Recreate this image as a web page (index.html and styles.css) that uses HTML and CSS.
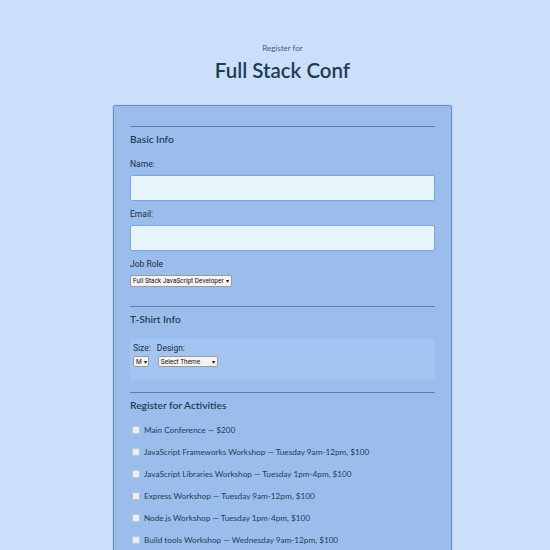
FILE: index.html
```html
<!DOCTYPE html>
<html>
<head>
<meta charset="utf-8">
<link rel="stylesheet" href="styles.css">
</head>
<body>
<div class="page">
  <header class="header">
    <div class="pre">Register for</div>
    <h1 class="title">Full Stack Conf</h1>
  </header>
  <form class="card">
    <fieldset class="section">
      <hr class="rule">
      <h2 class="legend">Basic Info</h2>
      <label class="label">Name:</label>
      <div class="input"></div>
      <label class="label">Email:</label>
      <div class="input"></div>
      <label class="label">Job Role</label>
      <div class="select role">Full Stack JavaScript Developer<span class="arrow">▾</span></div>
    </fieldset>
    <fieldset class="section">
      <hr class="rule">
      <h2 class="legend">T-Shirt Info</h2>
      <div class="shirt">
        <div class="field">
          <span class="small">Size:</span>
          <div class="select size">M<span class="arrow">▾</span></div>
        </div>
        <div class="field">
          <span class="small">Design:</span>
          <div class="select design">Select Theme<span class="arrow">▾</span></div>
        </div>
      </div>
    </fieldset>
    <fieldset class="section">
      <hr class="rule">
      <h2 class="legend">Register for Activities</h2>
      <div class="act"><span class="box"></span>Main Conference — $200</div>
      <div class="act"><span class="box"></span>JavaScript Frameworks Workshop — Tuesday 9am-12pm, $100</div>
      <div class="act"><span class="box"></span>JavaScript Libraries Workshop — Tuesday 1pm-4pm, $100</div>
      <div class="act"><span class="box"></span>Express Workshop — Tuesday 9am-12pm, $100</div>
      <div class="act"><span class="box"></span>Node.js Workshop — Tuesday 1pm-4pm, $100</div>
      <div class="act"><span class="box"></span>Build tools Workshop — Wednesday 9am-12pm, $100</div>
    </fieldset>
  </form>
</div>
</body>
</html>
```
FILE: styles.css
```css
html, body {
  margin: 0;
  padding: 0;
  background: #cbdffa;
  height: 100%;
  overflow: hidden;
}
.page {
  padding-left: 15px;
  font-family: Lato, "Noto Sans", sans-serif;
  color: #1c3d55;
}
.header {
  text-align: center;
  padding-top: 43px;
}
.pre {
  font-size: 8px;
  line-height: 11px;
  color: #4b5d70;
}
.title {
  margin: 3px 0 0;
  font-size: 20.5px;
  line-height: 26px;
  font-weight: 600;
  color: #1c3d55;
}
.card {
  width: 339px;
  box-sizing: border-box;
  margin: 22px auto 0;
  background: #9bbdec;
  border: 1px solid #6b8cbd;
  border-radius: 2px;
  padding: 20px 16px 20px;
  box-shadow: 0 0 2px rgba(80,110,160,0.3);
}
.section {
  border: 0;
  margin: 0;
  padding: 0;
  display: flex;
  flex-direction: column;
  align-items: flex-start;
}
.rule {
  align-self: stretch;
  border: 0;
  height: 1px;
  background: #5a7fae;
  margin: 0;
}
.legend {
  margin: 5px 0 0;
  font-size: 10.2px;
  line-height: 14px;
  font-weight: 600;
  color: #1c3d55;
}
.label {
  font-family: Roboto, "Liberation Sans", sans-serif;
  font-size: 8.5px;
  line-height: 10px;
  color: #1e2e40;
  margin-top: 8px;
}
.legend + .label { margin-top: 13px; }
.input {
  align-self: stretch;
  height: 26px;
  box-sizing: border-box;
  margin-top: 6px;
  background: #e6f4fc;
  border: 1px solid #7ca4e2;
  border-radius: 2px;
  box-shadow: inset 0 0 1px rgba(255,255,255,0.6);
}
.select {
  font-family: Roboto, "Liberation Sans", sans-serif;
  font-size: 6.5px;
  line-height: 8px;
  color: #111;
  background: #f3f3f3;
  border: 1px solid #9a9a9a;
  border-radius: 2px;
  padding: 1px 2px;
  display: flex;
  align-items: center;
  justify-content: space-between;
  white-space: nowrap;
}
.arrow { font-size: 6px; margin-left: 2px; }
.role { margin-top: 6px; width: 102px; box-sizing: border-box; margin-bottom: 19px; }
.shirt {
  align-self: stretch;
  margin-top: 13px;
  background: #a3c4f0;
  height: 40px;
  box-sizing: border-box;
  padding: 4px 3px;
  display: flex;
  gap: 6px;
  margin-bottom: 13px;
}
.field { display: flex; flex-direction: column; gap: 3px; }
.small {
  font-family: Roboto, "Liberation Sans", sans-serif;
  font-size: 8.5px;
  line-height: 10px;
  color: #1e2e40;
}
.size { width: 16px; box-sizing: border-box; height: 11px; }
.design { width: 60px; box-sizing: border-box; height: 11px; margin-left: 1px; }
.act {
  font-size: 8.2px;
  line-height: 10px;
  color: #1c3d55;
  display: flex;
  align-items: center;
  margin-top: 12px;
}
.legend + .act { margin-top: 13px; }
.box {
  width: 6px;
  height: 6px;
  background: #e8eef6;
  border: 1px solid #b8c4d4;
  border-radius: 1px;
  margin: 0 4px 0 2px;
}
```
